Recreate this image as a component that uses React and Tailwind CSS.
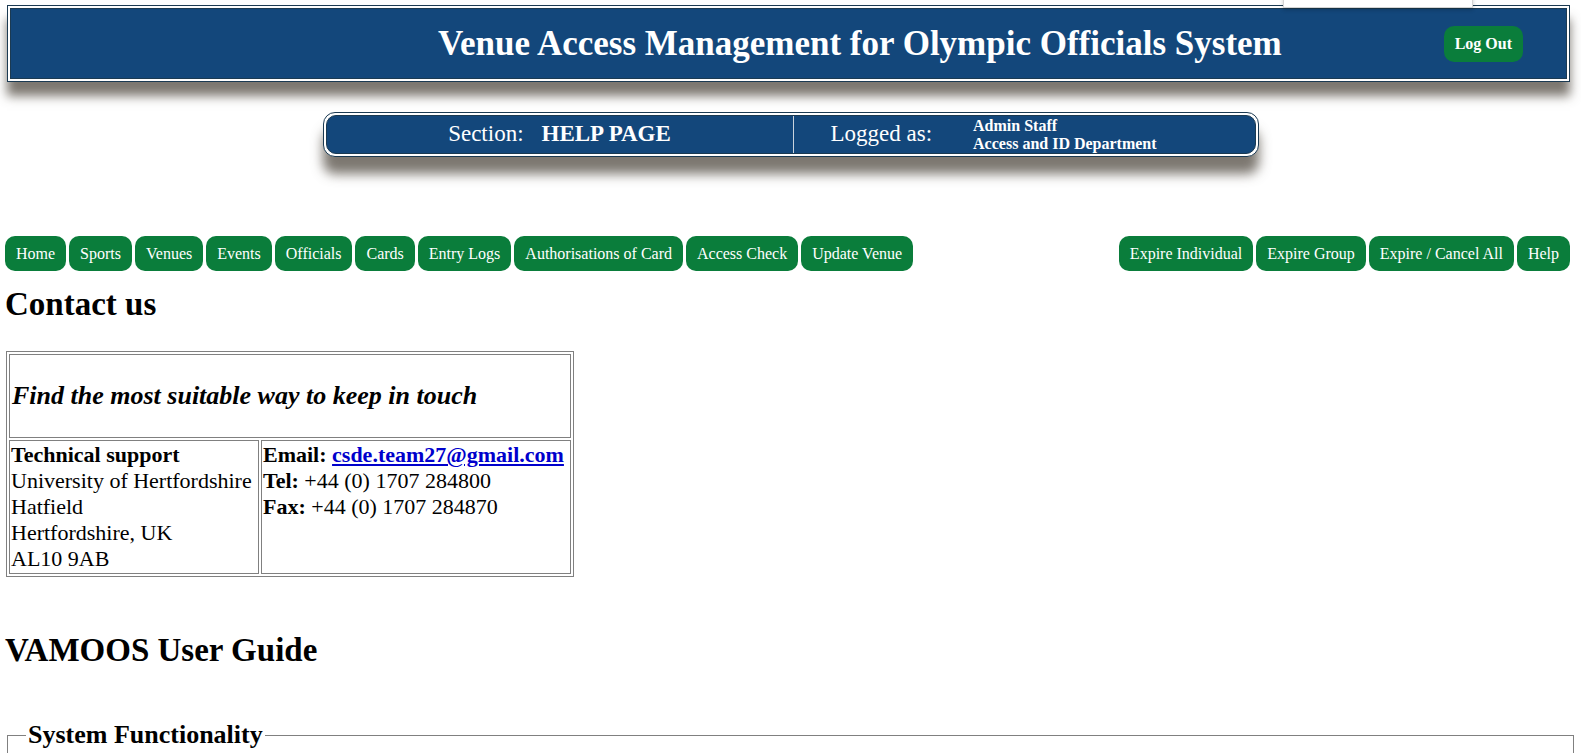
const navLeft = [
  'Home',
  'Sports',
  'Venues',
  'Events',
  'Officials',
  'Cards',
  'Entry Logs',
  'Authorisations of Card',
  'Access Check',
  'Update Venue',
];

const navRight = ['Expire Individual', 'Expire Group', 'Expire / Cancel All', 'Help'];

function NavButton({ label }) {
  return (
    <a
      href="#"
      className="flex h-[35px] items-center rounded-[10px] bg-[#0a7d3b] px-[11px] text-[16px] text-white"
    >
      {label}
    </a>
  );
}

export default function App() {
  return (
    <div className="relative min-h-screen overflow-hidden bg-white font-['Liberation_Serif',serif] text-black">
      {/* stray dropdown sticking out above the page */}
      <div className="absolute left-[1283px] top-[-12px] z-10 h-[20px] w-[190px] border border-[#d4d4d4] bg-white shadow-[0_2px_4px_rgba(0,0,0,0.2)]">
        <div className="ml-[108px] mt-[10px] h-[1px] w-[66px] bg-[#e2e2e2]" />
      </div>

      {/* header */}
      <header className="ml-[7px] mr-[11px] pt-[5px]">
        <div className="border border-[#1b3a52] bg-white p-[2px] shadow-[0_14px_10px_rgba(70,62,52,0.7)]">
          <div className="flex h-[71px] items-center border border-[#1b3a52] bg-[#13477b]">
            <h1 className="pl-[427px] text-[35px] font-bold leading-none text-white">
              Venue Access Management for Olympic Officials System
            </h1>
            <button className="ml-auto mr-[43px] h-[36px] rounded-[10px] bg-[#0a7d3b] px-[11px] text-[16px] font-bold text-white">
              Log Out
            </button>
          </div>
        </div>
      </header>

      {/* section bar */}
      <div className="mt-[30px] flex justify-center">
        <div className="w-[936px] rounded-[12px] border border-[#1b3a52] bg-white p-[2px] shadow-[0_17px_12px_rgba(70,62,52,0.7)]">
          <div className="flex h-[39px] rounded-[10px] border border-[#1b3a52] bg-[#13477b] text-white">
            <div className="flex w-[466px] items-center justify-center gap-[18px] text-[23px]">
              <span>Section:</span>
              <span className="font-bold">HELP PAGE</span>
            </div>
            <div className="w-[1px] bg-[#c9d3dd]" />
            <div className="flex flex-1 items-center pl-[37px]">
              <span className="text-[23px]">Logged as:</span>
              <div className="ml-[41px] text-[16px] font-bold leading-[18px]">
                <div>Admin Staff</div>
                <div>Access and ID Department</div>
              </div>
            </div>
          </div>
        </div>
      </div>

      {/* navigation */}
      <nav className="mt-[79px] flex justify-between pl-[5px] pr-[11px]">
        <div className="flex gap-[3px]">
          {navLeft.map((l) => (
            <NavButton key={l} label={l} />
          ))}
        </div>
        <div className="flex gap-[3px]">
          {navRight.map((l) => (
            <NavButton key={l} label={l} />
          ))}
        </div>
      </nav>

      <main className="px-[5px]">
        <h2 className="mt-[15px] text-[33px] font-bold leading-[37px]">Contact us</h2>

        <table className="mt-[28px] ml-[1px] border-separate border-spacing-[2px] border border-[#808080] text-[22px] leading-[26px]">
          <tbody>
            <tr>
              <td colSpan={2} className="h-[84px] border border-[#808080] px-[2px] align-middle">
                <h3 className="text-[26px] font-bold italic">Find the most suitable way to keep in touch</h3>
              </td>
            </tr>
            <tr>
              <td className="w-[250px] border border-[#808080] px-[1px] py-[1px] align-top">
                <b>Technical support</b>
                <br />
                University of Hertfordshire
                <br />
                Hatfield
                <br />
                Hertfordshire, UK
                <br />
                AL10 9AB
              </td>
              <td className="w-[310px] border border-[#808080] px-[1px] py-[1px] align-top">
                <b>Email: </b>
                <a href="#" className="font-bold text-[#0000cc] underline">
                  csde.team27@gmail.com
                </a>
                <br />
                <b>Tel:</b> +44 (0) 1707 284800
                <br />
                <b>Fax:</b> +44 (0) 1707 284870
              </td>
            </tr>
          </tbody>
        </table>

        <h2 className="mt-[55px] text-[33px] font-bold leading-[37px]">VAMOOS User Guide</h2>

        <fieldset className="mx-[2px] mt-[51px] min-h-[200px] border border-[#808080] px-[18px]">
          <legend className="px-[2px] text-[26px] font-bold leading-[30px]">System Functionality</legend>
        </fieldset>
      </main>
    </div>
  );
}
